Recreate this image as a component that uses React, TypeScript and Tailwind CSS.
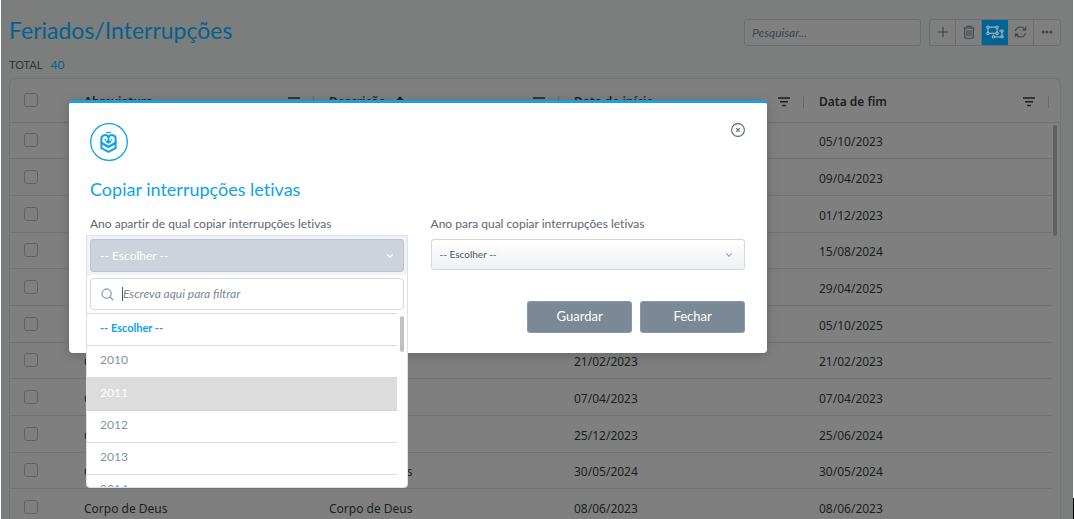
import React from "react";

const rows = [
  ["Implantação da República", "05/10/2023", "05/10/2023"],
  ["Páscoa", "09/04/2023", "09/04/2023"],
  ["Restauração", "01/12/2023", "01/12/2023"],
  ["Assunção", "15/08/2024", "15/08/2024"],
  ["Carnaval", "29/04/2025", "29/04/2025"],
  ["Carnaval", "05/10/2025", "05/10/2025"],
  ["Carnaval", "21/02/2023", "21/02/2023"],
  ["Carnaval", "07/04/2023", "07/04/2023"],
  ["Carnaval", "25/12/2023", "25/06/2024"],
  ["Corpo de Deus", "30/05/2024", "30/05/2024"],
  ["Corpo de Deus", "08/06/2023", "08/06/2023"],
];
const headers = ["Abreviatura", "Descrição", "Data de início", "Data de fim"];
const years = ["2010", "2011", "2012", "2013", "2014"];

function FilterIcon() {
  return (
    <svg width="14" height="12" viewBox="0 0 14 12" stroke="#1c1e20" strokeWidth="1.5" aria-hidden="true">
      <path d="M1 2h12M3 5.8h8M5.2 9.6h3.6" />
    </svg>
  );
}

function Chevron({ color }: { color: string }) {
  return (
    <svg width="8" height="6" viewBox="0 0 8 6" fill="none" stroke={color} strokeWidth="1.1" aria-hidden="true">
      <path d="M1.3 1.5L4 4.2l2.7-2.7" />
    </svg>
  );
}

function PlusIcon() {
  return (
    <svg width="12" height="12" viewBox="0 0 12 12" stroke="currentColor" strokeWidth="1.2">
      <path d="M6 .8v10.4M.8 6h10.4" />
    </svg>
  );
}

function TrashIcon() {
  return (
    <svg width="14" height="14" viewBox="0 0 14 14" fill="none" stroke="currentColor" strokeWidth="1.1">
      <path d="M1.5 3h11M4.7 3V1.2h4.6V3M2.7 3v9.2q0 1 1 1h6.6q1 0 1-1V3M5 5.2v5.8M7 5.2v5.8M9 5.2v5.8" />
    </svg>
  );
}

function GroupIcon() {
  return (
    <svg width="18" height="14" viewBox="0 0 18 14" fill="none" stroke="currentColor" strokeWidth="1.2">
      <path d="M3.2 2.2h6.6M2 3.4v3.8M3.2 8.4h6.6M11 3.4v3.8M12.8 6h2M16 7.2v3.4M14.8 11.8H8.7M7.5 10.6V9.8" />
      <circle cx="2" cy="2.2" r="1.2" />
      <circle cx="11" cy="2.2" r="1.2" />
      <circle cx="2" cy="8.4" r="1.2" />
      <circle cx="11" cy="8.4" r="1.2" />
      <circle cx="16" cy="6" r="1.2" />
      <circle cx="16" cy="11.8" r="1.2" />
      <circle cx="7.5" cy="11.8" r="1.2" />
    </svg>
  );
}

function RefreshIcon() {
  return (
    <svg width="13" height="12" viewBox="0 0 13 12" fill="none" stroke="currentColor" strokeWidth="1.1">
      <path d="M1.4 5.2A5.2 5.2 0 0 1 11 3.6M11.7.8v3.1H8.6M11.6 6.8A5.2 5.2 0 0 1 2 8.4M1.3 11.2V8.1h3.1" />
    </svg>
  );
}

function MoreIcon() {
  return (
    <svg width="12" height="4" viewBox="0 0 12 4" fill="currentColor">
      <circle cx="2" cy="2" r="1.5" />
      <circle cx="6" cy="2" r="1.5" />
      <circle cx="10" cy="2" r="1.5" />
    </svg>
  );
}

function OwlLogo() {
  return (
    <svg width="38" height="38" viewBox="0 0 38 38" fill="none" stroke="#0ea2e6" aria-hidden="true">
      <circle cx="19" cy="19" r="18.3" strokeWidth="1.3" />
      <path d="M16 9.5h5" strokeWidth="1.2" />
      <path
        d="M11.4 20.5V16.4a3.7 3.7 0 0 1 7.1-1.9 3.7 3.7 0 0 1 7.1 1.9v4.1"
        strokeWidth="2"
        strokeLinejoin="round"
      />
      <path d="M11.4 19v6.2l7.1 3.7 7.1-3.7V19" strokeWidth="2" />
      <path d="M11.6 20l6.9 3.9 6.9-3.9" strokeWidth="2.4" />
      <path d="M15.2 19l3.3 1.8 3.3-1.8-3.3-2.6z" fill="#0ea2e6" stroke="none" />
      <path d="M18.5 14v4.6" strokeWidth="1.6" />
      <circle cx="15.4" cy="16.8" r=".9" fill="#0ea2e6" stroke="none" />
      <circle cx="21.6" cy="16.8" r=".9" fill="#0ea2e6" stroke="none" />
    </svg>
  );
}

const tools = [
  { label: "Adicionar", icon: <PlusIcon /> },
  { label: "Eliminar", icon: <TrashIcon /> },
  { label: "Copiar interrupções", icon: <GroupIcon />, active: true },
  { label: "Atualizar", icon: <RefreshIcon /> },
  { label: "Mais opções", icon: <MoreIcon /> },
];

function Check({ label }: { label: string }) {
  return (
    <input
      type="checkbox"
      aria-label={label}
      className="block size-3.5 appearance-none rounded-[3px] border border-[#606264]"
    />
  );
}

export default function App() {
  return (
    <div className="relative h-screen overflow-hidden bg-white px-px font-[Lato,sans-serif]">
      <main className="flex h-full flex-col bg-[#7b7e7d] pl-2 pr-3">
        <header className="flex items-center justify-between pt-4">
          <h1 className="pb-1 text-[23px] leading-7 text-[#07608f]">Feriados/Interrupções</h1>
          <div className="flex items-center gap-2">
            <input
              type="text"
              aria-label="Pesquisar"
              placeholder="Pesquisar..."
              className="h-[27px] w-[177px] rounded-[3px] border border-[#6b6f71] bg-[#7f7f7f] px-[7px] text-xs italic placeholder:text-[#3e444b]"
            />
            <div className="flex h-[27px] overflow-hidden rounded-[3px] border border-[#6b6f71] bg-[#7f7f7f]">
              {tools.map((t) => (
                <button
                  key={t.label}
                  type="button"
                  aria-label={t.label}
                  className={
                    t.active
                      ? "flex w-[26px] items-center justify-center bg-[#006595] text-[#9fb2bc]"
                      : "flex w-[26px] items-center justify-center border-r border-[#6b6f71] text-[#3e444b] last:border-r-0"
                  }
                >
                  {t.icon}
                </button>
              ))}
            </div>
          </div>
        </header>
        <p className="mt-2 flex gap-2 text-[11px] leading-[18px] text-[#303539]">
          TOTAL <span className="text-xs leading-[18px] text-[#07608f]">40</span>
        </p>
        <section className="relative mt-1 min-h-0 flex-1 overflow-hidden rounded-t-md border border-b-0 border-[#727575] bg-[#7f7f7f] font-['Noto_Sans',sans-serif] text-xs text-[#1c1f20]">
          <table className="w-full table-fixed border-collapse">
            <colgroup>
              <col className="w-[62px]" />
              <col />
              <col />
              <col />
              <col />
              <col className="w-2" />
            </colgroup>
            <thead>
              <tr className="h-[43px] border-b border-[#6f7172]">
                <th className="pl-3.5">
                  <Check label="Selecionar todos" />
                </th>
                {headers.map((h) => (
                  <th key={h} className="pl-3 pt-1 text-left font-semibold">
                    <div className="flex items-center">
                      {h}
                      {h === "Descrição" && (
                        <svg className="ml-2" width="12" height="12" viewBox="0 0 12 12" fill="none" stroke="#1c1e20" strokeWidth="1.6">
                          <path d="M6 11V1.5M1.5 6L6 1.5 10.5 6" />
                        </svg>
                      )}
                      <span className="ml-auto mr-3 flex">
                        <FilterIcon />
                      </span>
                      <span className="mr-[3px] h-3 w-px bg-[#666869]" />
                    </div>
                  </th>
                ))}
                <th />
              </tr>
            </thead>
            <tbody>
              {rows.map((r, i) => (
                <tr key={i} className="h-[37px] nth-[3n+1]:h-9">
                  <td className="border-b border-[#717273] pl-3.5">
                    <Check label={"Selecionar " + r[0]} />
                  </td>
                  <td className="truncate border-b border-[#717273] pl-3 pt-1">{r[0]}</td>
                  <td className="truncate border-b border-[#717273] pl-3 pt-1">{r[0]}</td>
                  <td className="border-b border-[#717273] pl-3 pt-1">{r[1]}</td>
                  <td className="border-b border-[#717273] pl-3 pt-1">{r[2]}</td>
                  <td />
                </tr>
              ))}
            </tbody>
          </table>
          <div className="absolute right-[3px] top-[46px] h-[111px] w-1 rounded-full bg-[#606162]" />
        </section>
      </main>
      <div className="absolute bottom-0 right-0 h-[21px] w-px bg-black" />

      <div
        role="dialog"
        aria-labelledby="dialog-title"
        className="absolute left-[69px] top-[100px] w-[65%] rounded-[4px] border-t-[3px] border-[#1b9fe0] bg-white pl-[21px] pr-[22px] py-5 shadow-[0_2px_12px_rgba(0,0,0,0.2)]"
      >
        <div className="flex items-start justify-between">
          <OwlLogo />
          <button type="button" aria-label="Fechar janela" className="text-[#5d6570]">
            <svg width="14" height="14" viewBox="0 0 14 14" fill="none" stroke="currentColor" strokeWidth="1.1">
              <circle cx="7" cy="7" r="6.4" />
              <path d="M5.2 5.2l3.6 3.6M8.8 5.2L5.2 8.8" />
            </svg>
          </button>
        </div>
        <h2 id="dialog-title" className="mt-4 text-lg leading-6 text-[#0ea2e6] [font-variant-ligatures:no-common-ligatures]">
          Copiar interrupções letivas
        </h2>
        <div className="mt-3.5 grid grid-cols-2 gap-[26px] text-xs text-[#5d6570]">
          <div className="relative">
            <label htmlFor="from-year" className="block leading-[18px] [font-variant-ligatures:no-common-ligatures]">
              Ano apartir de qual copiar interrupções letivas
            </label>
            <div className="absolute -left-1 -right-[3px] top-5 z-10 h-[253px] overflow-hidden rounded-b-[4px] border border-[#dde0e5] bg-white">
              <div className="bg-[#f0f3f9] p-[3px]">
                <button
                  id="from-year"
                  type="button"
                  className="flex h-[33px] w-full items-center justify-between rounded-[3px] border border-[#c0c4ce] bg-[#ced2dc] px-[9px] text-white"
                >
                  -- Escolher --
                  <Chevron color="#fff" />
                </button>
              </div>
              <div className="mx-[3px] mt-[3px] flex h-8 items-center gap-2 rounded-[4px] border border-[#d3d8df] pl-2.5">
                <svg width="13" height="13" viewBox="0 0 13 13" fill="none" stroke="#8fa0b5" strokeWidth="1.3">
                  <circle cx="5.6" cy="5.6" r="4.6" />
                  <path d="M9 9l3.3 3.3" />
                </svg>
                <div className="flex h-3.5 flex-1 items-center border-l border-[#4b5563]">
                  <input
                    type="text"
                    aria-label="Filtrar"
                    placeholder="Escreva aqui para filtrar"
                    className="w-full text-xs italic outline-none placeholder:text-[#7b8794]"
                  />
                </div>
              </div>
              <ul role="listbox" aria-label="Ano" className="mr-2.5 mt-[3px] text-[#8492a3]">
                <li role="option" aria-selected="true" className="h-[33px] border-y border-[#d8dce0] pl-[13px] text-[11px] font-bold leading-[27px] text-[#0ea2e6]">
                  -- Escolher --
                </li>
                {years.map((y) => (
                  <li
                    key={y}
                    role="option"
                    aria-selected="false"
                    className={
                      y === "2011"
                        ? "h-[33px] border-b border-[#d0d5da] bg-[#dcdcdc] pl-[13px] leading-[29px] text-white"
                        : "h-8 border-b border-[#d8dce0] pl-[13px] leading-[27px]"
                    }
                  >
                    {y}
                  </li>
                ))}
              </ul>
              <div className="absolute right-[3px] top-20 h-9 w-1 rounded-full bg-[#c1c1c1]" />
            </div>
          </div>
          <div>
            <label htmlFor="to-year" className="block leading-[18px] [font-variant-ligatures:no-common-ligatures]">
              Ano para qual copiar interrupções letivas
            </label>
            <div className="relative mt-1.5">
              <select
                id="to-year"
                className="block h-[31px] w-full appearance-none rounded-[3px] border border-[#d3d7dd] bg-linear-to-b from-white to-[#eff1f4] px-2 text-[10px] text-[#4f5761]"
              >
                <option>-- Escolher --</option>
              </select>
              <span className="pointer-events-none absolute inset-y-0 right-3 flex items-center">
                <Chevron color="#a3aab3" />
              </span>
            </div>
          </div>
        </div>
        <div className="mt-[31px] flex justify-end gap-2 text-[13px] text-white">
          <button type="button" className="h-8 w-[105px] rounded-[3px] border border-[#8b98a6] bg-[#7b8895]">
            Guardar
          </button>
          <button type="button" className="h-8 w-[105px] rounded-[3px] border border-[#8b98a6] bg-[#7b8895]">
            Fechar
          </button>
        </div>
      </div>
    </div>
  );
}
